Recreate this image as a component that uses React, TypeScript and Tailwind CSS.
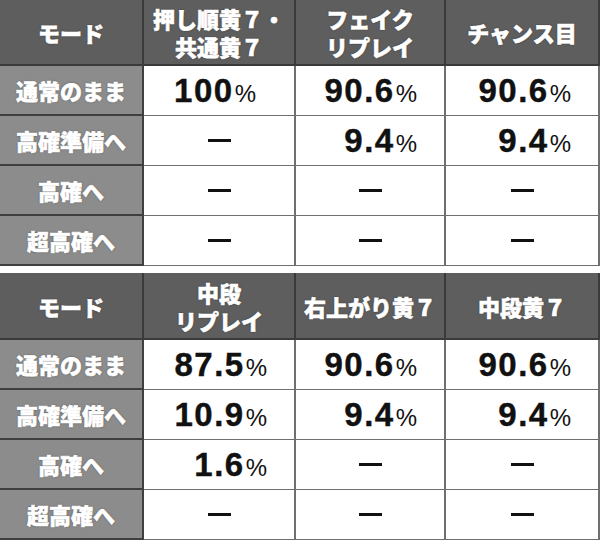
import React from 'react';

type Val = { v: string; align?: 'c' | 'r' };

const JP = "font-['Noto_Sans_CJK_JP','Noto_Sans',sans-serif]";
const NUM = "font-['Liberation_Sans',Arial,sans-serif]";

const TABLES: { header: string[][]; heights: string; rows: { label: string; vals: Val[] }[] }[] = [
  {
    header: [['モード'], ['押し順黄７・', '共通黄７'], ['フェイク', 'リプレイ'], ['チャンス目']],
    heights: 'grid-rows-[66px_50px_50px_50px_50px]',
    rows: [
      { label: '通常のまま', vals: [{ v: '100', align: 'c' }, { v: '90.6' }, { v: '90.6' }] },
      { label: '高確準備へ', vals: [{ v: '-' }, { v: '9.4' }, { v: '9.4' }] },
      { label: '高確へ', vals: [{ v: '-' }, { v: '-' }, { v: '-' }] },
      { label: '超高確へ', vals: [{ v: '-' }, { v: '-' }, { v: '-' }] },
    ],
  },
  {
    header: [['モード'], ['中段', 'リプレイ'], ['右上がり黄７'], ['中段黄７']],
    heights: 'grid-rows-[67px_50px_50px_50px_50px]',
    rows: [
      { label: '通常のまま', vals: [{ v: '87.5' }, { v: '90.6' }, { v: '90.6' }] },
      { label: '高確準備へ', vals: [{ v: '10.9' }, { v: '9.4' }, { v: '9.4' }] },
      { label: '高確へ', vals: [{ v: '1.6' }, { v: '-' }, { v: '-' }] },
      { label: '超高確へ', vals: [{ v: '-' }, { v: '-' }, { v: '-' }] },
    ],
  },
];

// heavy white gothic look of the original
const jpText = `text-white font-black text-[22px] ${JP} [-webkit-text-stroke:0.6px_#fff] [text-shadow:0_0_2px_rgba(0,0,0,0.6)]`;

function DataCell({ val }: { val: Val }) {
  const base = `bg-white border-r-2 border-b border-[#6f6f6f] flex items-center justify-end ${NUM}`;
  if (val.v === '-') {
    return (
      <div className={`${base} !justify-center`}>
        <span className="block w-[23px] h-[3px] bg-[#111]" aria-label="—"></span>
      </div>
    );
  }
  return (
    <div className={`${base} ${val.align === 'c' ? 'pr-[38px]' : 'pr-[27px]'}`}>
      <span className="flex items-baseline text-[#111] leading-none">
        <span className="text-[33px] font-bold tracking-[1.5px] [-webkit-text-stroke:0.4px_#111]">{val.v}</span>
        <span className="text-[24px] ml-[1px]">%</span>
      </span>
    </div>
  );
}

export default function App() {
  return (
    <div className="w-[600px] h-[540px] bg-white flex flex-col gap-[7px] overflow-hidden">
      {TABLES.map((t, ti) => (
        <div key={ti} className={`grid grid-cols-[144px_152px_150px_154px] ${t.heights}`}>
          {t.header.map((lines, i) => (
            <div
              key={i}
              className={`bg-[#5e5e5e] border-r-2 border-b-2 border-[#3a3a3a] flex flex-col items-center justify-center leading-[28px] ${jpText}`}
            >
              {lines.map((l) => (
                <span key={l} className="block">{l}</span>
              ))}
            </div>
          ))}
          {t.rows.map((r) => (
            <React.Fragment key={r.label}>
              <div
                className={`bg-[#8c8c8c] border-r-2 border-b-2 border-[#3f3f3f] flex items-center justify-center ${jpText}`}
              >
                {r.label}
              </div>
              {r.vals.map((v, i) => (
                <DataCell key={i} val={v} />
              ))}
            </React.Fragment>
          ))}
        </div>
      ))}
    </div>
  );
}
